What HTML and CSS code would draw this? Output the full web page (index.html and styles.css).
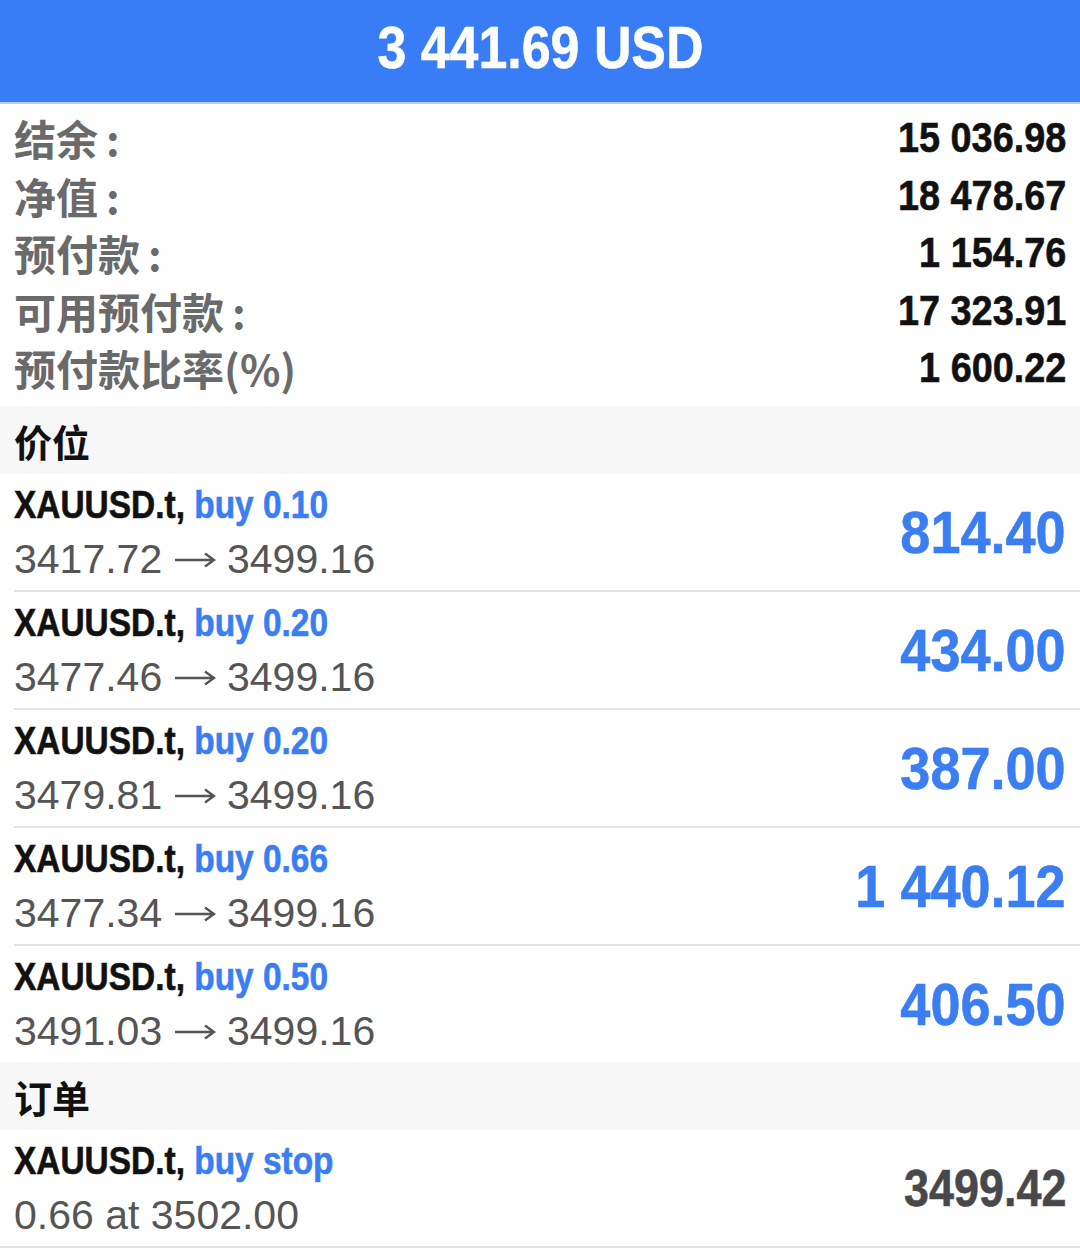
FILE: index.html
```html
<!DOCTYPE html>
<html lang="zh">
<head>
<meta charset="utf-8">
<link rel="stylesheet" href="styles.css">
</head>
<body>
<div class="header"><span class="cond htext">3 441.69 USD</span></div>
<div class="summary">
  <div class="srow"><span class="slabel">结余<span class="colon">:</span></span><span class="cond sval">15 036.98</span></div>
  <div class="srow"><span class="slabel">净值<span class="colon">:</span></span><span class="cond sval">18 478.67</span></div>
  <div class="srow"><span class="slabel">预付款<span class="colon">:</span></span><span class="cond sval">1 154.76</span></div>
  <div class="srow"><span class="slabel">可用预付款<span class="colon">:</span></span><span class="cond sval">17 323.91</span></div>
  <div class="srow"><span class="slabel">预付款比率(%)</span><span class="cond sval">1 600.22</span></div>
</div>
<div class="section">价位</div>
<div class="trow">
  <div class="tleft"><span class="cond tl1"><span class="sym">XAUUSD.t,</span> <span class="side">buy 0.10</span></span><div class="tl2">3417.72 <svg class="arrow" viewBox="0 0 42 16"><path d="M1 8H40M31 1.5L40 8L31 14.5"/></svg> 3499.16</div></div>
  <span class="cond profit">814.40</span>
</div>
<div class="trow">
  <div class="tleft"><span class="cond tl1"><span class="sym">XAUUSD.t,</span> <span class="side">buy 0.20</span></span><div class="tl2">3477.46 <svg class="arrow" viewBox="0 0 42 16"><path d="M1 8H40M31 1.5L40 8L31 14.5"/></svg> 3499.16</div></div>
  <span class="cond profit">434.00</span>
</div>
<div class="trow">
  <div class="tleft"><span class="cond tl1"><span class="sym">XAUUSD.t,</span> <span class="side">buy 0.20</span></span><div class="tl2">3479.81 <svg class="arrow" viewBox="0 0 42 16"><path d="M1 8H40M31 1.5L40 8L31 14.5"/></svg> 3499.16</div></div>
  <span class="cond profit">387.00</span>
</div>
<div class="trow">
  <div class="tleft"><span class="cond tl1"><span class="sym">XAUUSD.t,</span> <span class="side">buy 0.66</span></span><div class="tl2">3477.34 <svg class="arrow" viewBox="0 0 42 16"><path d="M1 8H40M31 1.5L40 8L31 14.5"/></svg> 3499.16</div></div>
  <span class="cond profit">1 440.12</span>
</div>
<div class="trow last">
  <div class="tleft"><span class="cond tl1"><span class="sym">XAUUSD.t,</span> <span class="side">buy 0.50</span></span><div class="tl2">3491.03 <svg class="arrow" viewBox="0 0 42 16"><path d="M1 8H40M31 1.5L40 8L31 14.5"/></svg> 3499.16</div></div>
  <span class="cond profit">406.50</span>
</div>
<div class="section">订单</div>
<div class="trow order">
  <div class="tleft"><span class="cond tl1"><span class="sym">XAUUSD.t,</span> <span class="side">buy stop</span></span><div class="tl2">0.66 at 3502.00</div></div>
  <span class="cond oprice">3499.42</span>
</div>
</body>
</html>
```
FILE: styles.css
```css
html, body { margin: 0; padding: 0; background: #ffffff; }
body { width: 1080px; font-family: "Liberation Sans", "Noto Sans CJK SC", sans-serif; }
.cond {
  display: inline-block;
  font-family: "Liberation Sans", Arial, sans-serif;
  font-weight: bold;
  white-space: nowrap;
  -webkit-text-stroke: 0.6px currentColor;
}
.header {
  height: 104px;
  background: #387cf6;
  border-bottom: 2px solid #b8cff8;
  box-sizing: border-box;
  display: flex; align-items: center; justify-content: center;
  padding-bottom: 8px;
}
.htext { color: #fff; font-size: 60px; transform: scaleX(0.865); transform-origin: center; }
.summary { padding: 5px 14px 9.5px 14px; }
.srow { height: 57.5px; display: flex; align-items: center; justify-content: space-between; }
.slabel { font-family: "Noto Sans CJK SC", sans-serif; font-size: 42px; color: #6a6a6a; font-weight: 700; }
.colon { margin-left: 8px; }
.sval { font-size: 43px; color: #111; transform: scaleX(0.88); transform-origin: right center; }
.section {
  background: #f7f7f7; height: 68px; padding-left: 14px;
  display: flex; align-items: center;
  font-family: "Noto Sans CJK SC", sans-serif; font-size: 38px; color: #111; font-weight: 700;
}
.trow {
  height: 118px; box-sizing: border-box; margin-left: 14px; padding-right: 14px;
  border-bottom: 2px solid #e2e2e2;
  display: flex; align-items: center; justify-content: space-between;
}
.trow.last { border-bottom: none; height: 116px; }
.trow.order { margin-left: 0; padding-left: 14px; }
.tleft { display: flex; flex-direction: column; align-items: flex-start; }
.tl1 { font-size: 38px; line-height: 54px; transform: scaleX(0.88); transform-origin: left center; }
.sym { color: #111; }
.side { color: #3a7ef2; }
.tl2 { font-family: "Liberation Sans", Arial, sans-serif; font-size: 41px; color: #555; line-height: 54px; white-space: nowrap; }
.arrow { width: 42px; height: 16px; vertical-align: 5px; fill: none; stroke: #555; stroke-width: 2.4; }
.profit { font-size: 60px; color: #3a7ef2; transform: scaleX(0.9); transform-origin: right center; }
.oprice { font-size: 51px; color: #48484c; transform: scaleX(0.88); transform-origin: right center; }
```
